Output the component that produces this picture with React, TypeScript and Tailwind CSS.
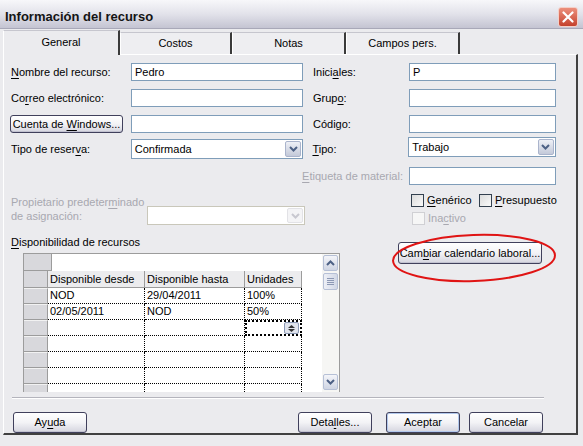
import React from "react";

function U({ children }: { children: React.ReactNode }) {
  return <span className="underline underline-offset-[2px] decoration-1">{children}</span>;
}

function Chevron({ up = false, color = "#4d6185" }: { up?: boolean; color?: string }) {
  return (
    <svg width="9" height="6" viewBox="0 0 9 6">
      <polyline
        points={up ? "1,5 4.5,1.5 8,5" : "1,1 4.5,4.5 8,1"}
        fill="none"
        stroke={color}
        strokeWidth="2"
      />
    </svg>
  );
}

function TextBox({ value = "", className = "" }: { value?: string; className?: string }) {
  return (
    <div className={`h-[18px] border border-[#7f9db9] bg-white px-[3px] text-[11px] leading-[16px] ${className}`}>
      {value}
    </div>
  );
}

function Select({
  value = "",
  disabled = false,
  className = "",
}: {
  value?: string;
  disabled?: boolean;
  className?: string;
}) {
  return (
    <div
      className={`flex border bg-white ${disabled ? "border-[#c9c7ba]" : "border-[#7f9db9]"} ${className}`}
    >
      <span className="flex-1 px-[3px] text-[11px] leading-[18px]">{value}</span>
      <span
        className={`m-px flex w-[16px] items-center justify-center rounded-[2px] border ${
          disabled
            ? "border-[#e2e2e6] bg-[#f4f4f6]"
            : "border-[#aab4cc] bg-gradient-to-b from-[#eef0f6] to-[#c3c9d9]"
        }`}
      >
        <Chevron color={disabled ? "#c8c8d0" : "#4d6185"} />
      </span>
    </div>
  );
}

function Btn({
  children,
  className = "",
  isDefault = false,
}: {
  children: React.ReactNode;
  className?: string;
  isDefault?: boolean;
}) {
  return (
    <button
      type="button"
      className={`flex items-center justify-center rounded-[3px] border border-[#40405c] bg-gradient-to-b from-white via-[#f3f3f6] to-[#d5d5df] text-[11px] text-black ${
        isDefault ? "shadow-[inset_0_0_0_1px_#b2c8ec]" : "shadow-[inset_0_-1px_0_#c2c2d0]"
      } ${className}`}
    >
      <span>{children}</span>
    </button>
  );
}

function Check({ label, disabled = false }: { label: React.ReactNode; disabled?: boolean }) {
  return (
    <div className="flex items-center gap-[3px]">
      <span
        className={`h-[13px] w-[13px] border ${
          disabled
            ? "border-[#d0d0d4] bg-[#f6f6f6]"
            : "border-[#33404f] bg-gradient-to-br from-[#dcdcdc] to-[#fafafa]"
        }`}
      />
      <span className={`text-[11px] leading-[13px] ${disabled ? "text-[#a8a8b0]" : "text-black"}`}>
        {label}
      </span>
    </div>
  );
}

function Tab({ label, active = false, w }: { label: string; active?: boolean; w: string }) {
  return (
    <div
      className={`flex items-center justify-center border-l border-t border-l-white border-t-[#c6c6ce] border-r-2 border-r-[#3a3a3a] text-[11px] ${w} ${
        active ? "relative z-10 -mb-px h-[25px] bg-[#ebebee] pb-[2px]" : "h-[22px] bg-[#eeeef1]"
      }`}
    >
      {label}
    </div>
  );
}

const rows: [string, string, string][] = [
  ["NOD", "29/04/2011", "100%"],
  ["02/05/2011", "NOD", "50%"],
  ["", "", ""],
  ["", "", ""],
  ["", "", ""],
  ["", "", ""],
  ["", "", ""],
];

function ScrollBtn({ up }: { up: boolean }) {
  return (
    <div className="mx-px flex h-[16px] items-center justify-center rounded-[2px] border border-[#b6c0d6] bg-gradient-to-b from-[#f4f5f9] to-[#cfd5e3]">
      <Chevron up={up} />
    </div>
  );
}

function Grid() {
  return (
    <div className="ml-[12px] mt-[4px] flex h-[139px] w-[317px] overflow-hidden border-l border-r border-t border-[#9c9c9c] bg-white">
      <div className="w-[298px] text-[11px]">
        <div className="flex h-[17px]">
          <div className="w-[28px] border-b border-r border-[#9c9c9c] bg-[#d8d8dc]" />
          <div className="flex-1" />
        </div>
        <div className="flex h-[17px] leading-[16px]">
          <div className="w-[24px] border-b border-r border-[#9c9c9c] bg-[#d8d8dc]" />
          <div className="w-[97px] border-b border-r border-[#9c9c9c] bg-[#ececee] pl-[2px]">Disponible desde</div>
          <div className="w-[100px] border-b border-r border-[#9c9c9c] bg-[#ececee] pl-[2px]">Disponible hasta</div>
          <div className="w-[57px] border-b border-r border-[#9c9c9c] bg-[#ececee] pl-[2px]">Unidades</div>
          <div className="flex-1" />
        </div>
        {rows.map((r, i) => (
          <div key={i} className="flex h-[16px] leading-[15px]">
            <div className="w-[24px] border-b border-r border-t border-b-[#9c9c9c] border-r-[#9c9c9c] border-t-[#f2f2f2] bg-[#d8d8dc]" />
            <div className="w-[97px] border-b border-r border-dotted border-black pl-[2px]">{r[0]}</div>
            <div className="w-[100px] border-b border-r border-dotted border-black pl-[2px]">{r[1]}</div>
            {i === 2 ? (
              <div className="flex w-[57px] items-center justify-end border-2 border-dotted border-black pr-[1px]">
                <div className="flex h-[12px] w-[15px] flex-col items-center justify-center gap-px rounded-[2px] border border-[#8a98b4] bg-[#dfe3ec]">
                  <svg width="7" height="3" viewBox="0 0 7 3"><polygon points="0,3 3.5,0 7,3" fill="#333" /></svg>
                  <svg width="7" height="3" viewBox="0 0 7 3"><polygon points="0,0 3.5,3 7,0" fill="#333" /></svg>
                </div>
              </div>
            ) : (
              <div className="w-[57px] border-b border-r border-dotted border-black pl-[2px]">{r[2]}</div>
            )}
            <div className="flex-1" />
          </div>
        ))}
      </div>
      <div className="flex w-[17px] flex-col justify-between bg-[#f6f6f4] py-px">
        <div>
          <ScrollBtn up />
          <div className="mx-px mt-[2px] flex h-[17px] flex-col items-center justify-center gap-px rounded-[2px] border border-[#b6c0d6] bg-gradient-to-r from-[#eef0f6] to-[#d2d8e6]">
            <span className="h-px w-[7px] bg-[#8c98b4]" />
            <span className="h-px w-[7px] bg-[#8c98b4]" />
            <span className="h-px w-[7px] bg-[#8c98b4]" />
            <span className="h-px w-[7px] bg-[#8c98b4]" />
          </div>
        </div>
        <div className="mb-px">
          <ScrollBtn up={false} />
        </div>
      </div>
    </div>
  );
}

export default function App() {
  return (
    <div className="relative flex h-[446px] w-[583px] flex-col overflow-hidden bg-[#ebebee] font-['Liberation_Sans',Arial,sans-serif] text-black">
      {/* title bar */}
      <div className="flex h-[29px] items-start justify-between border-b border-[#a8a8b8] bg-gradient-to-b from-[#f7f7fa] via-[#e2e2ea] to-[#c4c4d2] px-[5px]">
        <span className="pt-[9px] text-[13px] font-bold leading-[16px] text-[#141414]">Información del recurso</span>
        <span className="mt-[7px] flex h-[20px] w-[20px] items-center justify-center rounded-[3px] border border-[#f4d0c8] bg-gradient-to-b from-[#ec8f7c] to-[#c4402c]">
          <svg width="12" height="12" viewBox="0 0 12 12">
            <path d="M1.5 1.5 L10.5 10.5 M10.5 1.5 L1.5 10.5" stroke="white" strokeWidth="2.2" strokeLinecap="round" />
          </svg>
        </span>
      </div>

      {/* tabs */}
      <div className="flex h-[25px] items-end pl-[3px]">
        <Tab label="General" active w="w-[117px]" />
        <Tab label="Costos" w="w-[112px]" />
        <Tab label="Notas" w="w-[114px]" />
        <Tab label="Campos pers." w="w-[114px]" />
      </div>

      {/* panel */}
      <div className="ml-[3px] h-[381px] w-[575px] border-l border-t border-l-white border-t-white border-r-2 border-b-2 border-r-[#404040] border-b-[#404040] pl-[7px] text-[11px]">
        <div className="w-[545px]">
          <div className="mt-[8px] flex h-[18px] items-center">
            <span className="w-[120px]"><U>N</U>ombre del recurso:</span>
            <TextBox value="Pedro" className="w-[172px]" />
            <span className="ml-[10px] w-[96px]">Inici<U>a</U>les:</span>
            <TextBox value="P" className="w-[147px]" />
          </div>
          <div className="mt-[8px] flex h-[18px] items-center">
            <span className="w-[120px]">Co<U>r</U>reo electrónico:</span>
            <TextBox className="w-[172px]" />
            <span className="ml-[10px] w-[96px]">Grup<U>o</U>:</span>
            <TextBox className="w-[147px]" />
          </div>
          <div className="mt-[8px] flex h-[18px] items-center">
            <span className="w-[120px]">
              <Btn className="-ml-px h-[18px] w-[113px]">Cuenta de <U>W</U>indows...</Btn>
            </span>
            <TextBox className="w-[172px]" />
            <span className="ml-[10px] w-[96px]">Código:</span>
            <TextBox className="w-[147px]" />
          </div>
          <div className="mt-[6px] flex h-[20px] items-center">
            <span className="w-[120px]">Tipo de reser<U>v</U>a:</span>
            <Select value="Confirmada" className="h-[20px] w-[173px]" />
            <span className="ml-[9px] w-[96px]"><U>T</U>ipo:</span>
            <Select value="Trabajo" className="-mt-[4px] h-[20px] w-[148px]" />
          </div>
          <div className="mt-[8px] flex h-[18px] items-center justify-end">
            <span className="text-[#a8a8b0]"><U>E</U>tiqueta de material:</span>
            <TextBox className="ml-[6px] w-[147px]" />
          </div>
        </div>

        {/* middle section */}
        <div className="flex">
          <div className="w-[329px]">
            <div className="mt-[10px] flex">
              <span className="w-[136px] leading-[14px] text-[#a8a8b0]">
                Propietario predeter<U>m</U>inado
                <br />
                de asignación:
              </span>
              <Select disabled className="mt-[11px] h-[19px] w-[158px]" />
            </div>
            <div className="mt-[11px] leading-[13px]"><U>D</U>isponibilidad de recursos</div>
            <Grid />
          </div>
          <div className="ml-[58px]">
            <div className="mt-[9px] flex pl-[13px]">
              <div className="w-[68px]"><Check label={<><U>G</U>enérico</>} /></div>
              <Check label={<><U>P</U>resupuesto</>} />
            </div>
            <div className="mt-[5px] pl-[14px]">
              <Check disabled label={<>Ina<U>c</U>tivo</>} />
            </div>
            <Btn className="mt-[17px] h-[22px] w-[144px]">Cam<U>b</U>iar calendario laboral...</Btn>
          </div>
        </div>

        {/* separator */}
        <div className="ml-[1px] mt-[5px] h-[2px] w-[532px] border-b border-t border-b-white border-t-[#b4b4bc]" />

        {/* buttons */}
        <div className="ml-[2px] mt-[13px] flex w-[530px] items-center justify-between">
          <Btn className="h-[21px] w-[74px]">Ay<U>u</U>da</Btn>
          <div className="flex">
            <Btn className="h-[21px] w-[74px]">Deta<U>l</U>les...</Btn>
            <Btn isDefault className="ml-[14px] h-[21px] w-[74px]">Aceptar</Btn>
            <Btn className="ml-[9px] h-[21px] w-[74px]">Cancelar</Btn>
          </div>
        </div>
      </div>

      {/* red annotation ellipse */}
      <svg className="pointer-events-none absolute left-[390px] top-[231px]" width="172" height="56" viewBox="0 0 172 56">
        <ellipse cx="84" cy="27" rx="81" ry="23" fill="none" stroke="#e01414" strokeWidth="2" transform="rotate(-2 84 27)" />
      </svg>
    </div>
  );
}
